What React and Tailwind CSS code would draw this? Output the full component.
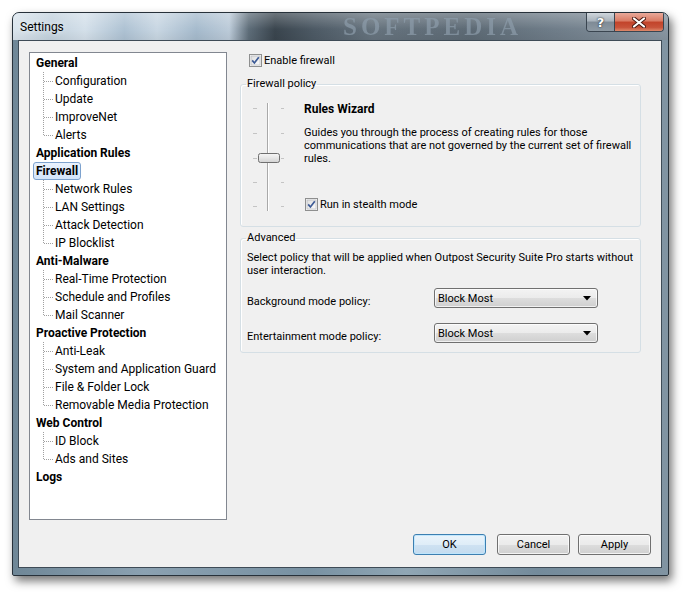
import React from "react";

const tree = [
  { h: "General", c: ["Configuration", "Update", "ImproveNet", "Alerts"] },
  { h: "Application Rules", c: [] },
  { h: "Firewall", sel: true, c: ["Network Rules", "LAN Settings", "Attack Detection", "IP Blocklist"] },
  { h: "Anti-Malware", c: ["Real-Time Protection", "Schedule and Profiles", "Mail Scanner"] },
  { h: "Proactive Protection", c: ["Anti-Leak", "System and Application Guard", "File & Folder Lock", "Removable Media Protection"] },
  { h: "Web Control", c: ["ID Block", "Ads and Sites"] },
  { h: "Logs", c: [] },
];

function Connector({ last }) {
  return (
    <svg width="22" height="18" className="shrink-0">
      <line x1="10.5" y1="0" x2="10.5" y2={last ? 9.5 : 18} stroke="#a0a0a0" strokeDasharray="1 1" />
      <line x1="11" y1="9.5" x2="20" y2="9.5" stroke="#a0a0a0" strokeDasharray="1 1" />
    </svg>
  );
}

function Check() {
  return (
    <svg width="13" height="13" className="shrink-0">
      <defs>
        <linearGradient id="cbg" x1="0" y1="0" x2="1" y2="1">
          <stop offset="0" stopColor="#dedede" />
          <stop offset="1" stopColor="#fbfbfb" />
        </linearGradient>
      </defs>
      <rect x="0.5" y="0.5" width="12" height="12" fill="#f4f4f4" stroke="#8e8f8f" />
      <rect x="2" y="2" width="9" height="9" fill="url(#cbg)" stroke="#aeb3b9" strokeWidth="0.6" />
      <path d="M3.2 6.4 L5.4 9 L9.8 3.2" fill="none" stroke="#3c5a96" strokeWidth="1.7" />
    </svg>
  );
}

function Slider() {
  const ticks = [7, 32, 57, 81, 105];
  return (
    <svg width="32" height="112" className="shrink-0">
      <defs>
        <linearGradient id="thumb" x1="0" y1="0" x2="0" y2="1">
          <stop offset="0" stopColor="#f6f6f6" />
          <stop offset="0.5" stopColor="#e6e6e6" />
          <stop offset="1" stopColor="#d2d2d2" />
        </linearGradient>
      </defs>
      {ticks.map((t) => (
        <g key={t}>
          <line x1="0" y1={t + 0.5} x2="4" y2={t + 0.5} stroke="#c4c4c4" />
          <line x1="28" y1={t + 0.5} x2="31" y2={t + 0.5} stroke="#c4c4c4" />
        </g>
      ))}
      <line x1="14.5" y1="2" x2="14.5" y2="110" stroke="#a9a9a9" />
      <line x1="15.5" y1="2" x2="15.5" y2="110" stroke="#ffffff" />
      <rect x="5.5" y="52.5" width="21" height="9" rx="2" fill="url(#thumb)" stroke="#6f6f6f" />
    </svg>
  );
}

function Combo({ value }) {
  return (
    <div className="w-[164px] h-[20px] border border-[#707070] rounded-[3px] bg-[linear-gradient(#f3f3f3_0%,#ebebeb_50%,#dddddd_51%,#cfcfcf_100%)] shadow-[inset_0_0_0_1px_rgba(255,255,255,0.7)] flex items-center pl-[3px] pr-[6px]">
      <span className="flex-1 text-[11px] leading-none text-black">{value}</span>
      <svg width="8" height="5">
        <path d="M0 0 L8 0 L4 4.5 Z" fill="#000" />
      </svg>
    </div>
  );
}

function Button({ children, focus }) {
  return (
    <div
      className={
        "w-[73px] h-[21px] rounded-[3px] border flex items-center justify-center text-[11px] leading-none text-black " +
        (focus
          ? "border-[#3c7fb1] bg-[linear-gradient(#eaf4fb_0%,#dfedf8_50%,#cfe2f2_51%,#c3dbef_100%)] shadow-[inset_0_0_0_1px_rgba(190,230,253,0.9)]"
          : "border-[#707070] bg-[linear-gradient(#f2f2f2_0%,#ebebeb_50%,#dddddd_51%,#cfcfcf_100%)] shadow-[inset_0_0_0_1px_rgba(255,255,255,0.75)]")
      }
    >
      {children}
    </div>
  );
}

export default function App() {
  return (
    <div className="w-[689px] h-[595px] bg-white overflow-hidden pt-[12px] pl-[12px]" style={{ fontFamily: "Roboto, 'Noto Sans', sans-serif" }}>
      <div className="w-[657px] h-[564px] border border-[#27313a] rounded-t-[7px] rounded-b-[2px] bg-[linear-gradient(90deg,#6f8797_0%,#8ba1b1_20%,#7891a2_45%,#90a6b4_60%,#748b9b_80%,#8194a2_100%)] shadow-[3px_5px_10px_rgba(0,0,0,0.55)] flex flex-col overflow-hidden">
        {/* Title bar */}
        <div className="h-[27px] relative flex items-start overflow-hidden bg-[linear-gradient(90deg,#dbe5ed_0%,#c3d2de_6%,#d4e0ea_11%,#aec2d3_17%,#c9d7e3_22%,#a6bbcd_28%,#bccbd9_33%,#5e6d79_36%,#3a454e_40%,#4d5a65_46%,#66737e_55%,#5d6a75_70%,#6e7c88_82%,#8996a2_100%)]">
          <div className="absolute inset-0 bg-[linear-gradient(rgba(255,255,255,0.25),rgba(255,255,255,0)_60%,rgba(0,0,0,0.05))]" />
          <span
            className="absolute left-[330px] top-[2px] text-[25px] font-bold tracking-[4px] text-[#8d9dab] opacity-70 leading-[24px] blur-[0.6px]"
            style={{ fontFamily: "'Liberation Serif', serif" }}
          >
            SOFTPEDIA
          </span>
          <span className="relative mt-[8px] ml-[7px] text-[12px] leading-none text-black [text-shadow:0_0_6px_rgba(255,255,255,0.9)]">Settings</span>
          <div className="relative ml-auto mr-[4px] flex h-[19px] rounded-b-[4px] border border-t-0 border-[#3a4550] overflow-hidden">
            <div className="w-[28px] h-full flex items-center justify-center bg-[linear-gradient(#cfd6dc_0%,#a9b3bc_45%,#7f8b96_50%,#8d99a3_100%)] border-r border-[#3a4550]">
              <span className="text-[13px] font-bold text-white leading-none [text-shadow:0_0_2px_#2a333b,0_0_1px_#2a333b]" style={{ fontFamily: "'DejaVu Sans', sans-serif" }}>?</span>
            </div>
            <div className="w-[48px] h-full flex items-center justify-center bg-[linear-gradient(#e9a99a_0%,#d97a63_45%,#c2432a_50%,#c8533a_80%,#de8a6c_100%)]">
              <svg width="14" height="11">
                <path d="M2 1.5 L12 9.5 M12 1.5 L2 9.5" stroke="#4a1a12" strokeWidth="4" strokeLinecap="round" />
                <path d="M2 1.5 L12 9.5 M12 1.5 L2 9.5" stroke="#ffffff" strokeWidth="2.2" strokeLinecap="round" />
              </svg>
            </div>
          </div>
        </div>

        {/* Body */}
        <div className="flex-1 flex pl-[5px] pr-[6px] pb-[7px]">
          <div className="flex-1 border border-[#3e4b56] bg-[#f0f0f0] flex flex-col pt-[11px] pl-[10px]">
            <div className="flex items-start">
              {/* Tree */}
              <div className="w-[198px] h-[468px] bg-white border border-[#828790] pl-[3px] pt-[1px] text-[12px] text-black">
                {tree.map((g) => (
                  <div key={g.h}>
                    <div className="h-[18px] flex items-center">
                      <span
                        className={
                          "h-[18px] flex items-center px-[2px] border rounded-[3px] font-bold leading-none " +
                          (g.sel
                            ? "border-[#7da2ce] bg-[linear-gradient(#e9f2fd,#d2e4fa)]"
                            : "border-transparent")
                        }
                      >
                        {g.h}
                      </span>
                    </div>
                    {g.c.map((c, i) => (
                      <div key={c} className="h-[18px] flex items-center">
                        <Connector last={i === g.c.length - 1} />
                        <span className="leading-none">{c}</span>
                      </div>
                    ))}
                  </div>
                ))}
              </div>

              {/* Right panel */}
              <div className="ml-[13px] w-[401px] flex flex-col text-[11px] text-black">
                <div className="h-[17px] flex items-center pl-[9px] gap-[2px]">
                  <Check />
                  <span className="leading-none">Enable firewall</span>
                </div>

                <fieldset className="mt-[8px] border border-[#d5dfe5] rounded-[3px] pl-[6px] pb-[13px] shadow-[inset_1px_1px_0_#ffffff]">
                  <legend className="px-[1px] -ml-[1px] leading-[14px]">Firewall policy</legend>
                  <div className="flex items-start pt-[10px] pl-[6px]">
                    <Slider />
                    <div className="ml-[19px] flex flex-col">
                      <div className="mt-[1px] leading-[14px] font-bold text-[12px]">Rules Wizard</div>
                      <div className="mt-[10px] leading-[13px]">
                        Guides you through the process of creating rules for those
                        <br />
                        communications that are not governed by the current set of firewall
                        <br />
                        rules.
                      </div>
                      <div className="mt-[32px] h-[14px] flex items-center gap-[2px] pl-[1px]">
                        <Check />
                        <span className="leading-none">Run in stealth mode</span>
                      </div>
                    </div>
                  </div>
                </fieldset>

                <fieldset className="mt-[4px] border border-[#d5dfe5] rounded-[3px] pl-[6px] pb-[9px] shadow-[inset_1px_1px_0_#ffffff]">
                  <legend className="px-[1px] -ml-[1px] leading-[14px]">Advanced</legend>
                  <div className="mt-[6px] leading-[13px]">
                    Select policy that will be applied when Outpost Security Suite Pro starts without
                    <br />
                    user interaction.
                  </div>
                  <div className="mt-[11px] h-[20px] flex items-center">
                    <span className="w-[187px] mt-[7px] leading-none">Background mode policy:</span>
                    <Combo value="Block Most" />
                  </div>
                  <div className="mt-[15px] h-[20px] flex items-center">
                    <span className="w-[187px] mt-[7px] leading-none">Entertainment mode policy:</span>
                    <Combo value="Block Most" />
                  </div>
                </fieldset>
              </div>
            </div>

            <div className="mt-[14px] flex justify-end pr-[10px]">
              <Button focus>OK</Button>
              <div className="ml-[11px]">
                <Button>Cancel</Button>
              </div>
              <div className="ml-[8px]">
                <Button>Apply</Button>
              </div>
            </div>
          </div>
        </div>
      </div>
    </div>
  );
}
